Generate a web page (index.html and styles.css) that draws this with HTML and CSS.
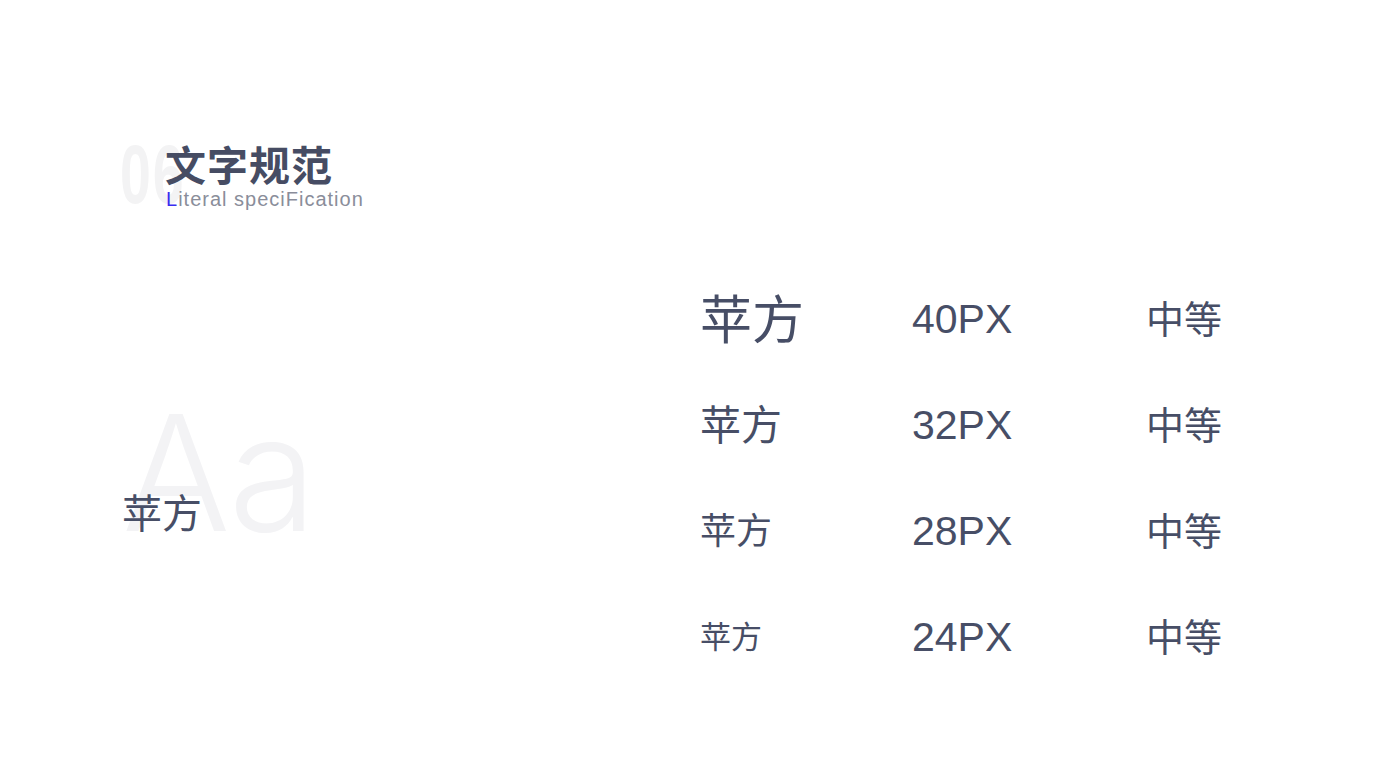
FILE: index.html
```html
<!DOCTYPE html>
<html lang="zh-CN">
<head>
<meta charset="utf-8">
<title>文字规范</title>
<link rel="stylesheet" href="styles.css">
</head>
<body>
<div class="page">
  <header class="header">
    <div class="num">06</div>
    <h1 class="title">文字规范</h1>
    <p class="subtitle"><span class="accent">L</span>iteral speciFication</p>
  </header>
  <main class="main">
    <section class="sample">
      <div class="watermark">Aa</div>
      <div class="sample-text">苹方</div>
    </section>
    <section class="specs">
      <div class="cell name s40">苹方</div><div class="cell size">40PX</div><div class="cell weight">中等</div>
      <div class="cell name s32">苹方</div><div class="cell size">32PX</div><div class="cell weight">中等</div>
      <div class="cell name s28">苹方</div><div class="cell size">28PX</div><div class="cell weight">中等</div>
      <div class="cell name s24">苹方</div><div class="cell size">24PX</div><div class="cell weight">中等</div>
    </section>
  </main>
</div>
</body>
</html>
```

FILE: styles.css
```css
* { box-sizing: border-box; }
html, body {
  margin: 0;
  padding: 0;
  background: #ffffff;
}
body {
  width: 1400px;
  height: 766px;
  overflow: hidden;
  font-family: "Noto Sans CJK SC", "Noto Sans", sans-serif;
  color: #474e66;
}
.page {
  width: 1400px;
  height: 766px;
}
.header {
  position: relative;
  padding-top: 140px;
  padding-left: 165px;
}
.num {
  position: absolute;
  left: 120px;
  top: 132px;
  font-family: "Liberation Sans", sans-serif;
  font-weight: 700;
  font-size: 84px;
  line-height: 84px;
  color: #f3f3f4;
  transform: scaleX(0.66);
  transform-origin: left top;
  letter-spacing: 3px;
}
.title {
  position: relative;
  margin: 0;
  font-size: 41px;
  line-height: 46px;
  font-weight: 700;
  color: #464c63;
  letter-spacing: 1px;
}
.subtitle {
  position: relative;
  margin: 1px 0 0 1px;
  font-family: "Liberation Sans", sans-serif;
  font-size: 20px;
  line-height: 24px;
  letter-spacing: 1px;
  color: #8a8d9a;
}
.accent { color: #3b2cf0; }
.main {
  display: flex;
  margin-top: 53px;
}
.sample {
  position: relative;
  width: 700px;
  padding-left: 122px;
  padding-top: 225px;
}
.watermark {
  position: absolute;
  left: 122px;
  top: 128px;
  font-family: "Inter", "Lato", sans-serif;
  font-weight: 300;
  font-size: 161px;
  line-height: 1;
  color: #f3f3f5;
  letter-spacing: -2px;
}
.sample-text {
  position: relative;
  font-size: 40px;
  line-height: 44px;
}
.specs {
  display: grid;
  grid-template-columns: 212px 234px 120px;
  grid-auto-rows: 106px;
  align-items: center;
}
.cell {
  line-height: 1.2;
}
.name.s40 { font-size: 52px; }
.name.s32 { font-size: 41px; }
.name.s28 { font-size: 36px; }
.name.s24 { font-size: 31px; }
.size {
  padding-top: 6px;
  font-family: "Liberation Sans", sans-serif;
  font-size: 41px;
}
.weight {
  font-size: 38px;
}
```
